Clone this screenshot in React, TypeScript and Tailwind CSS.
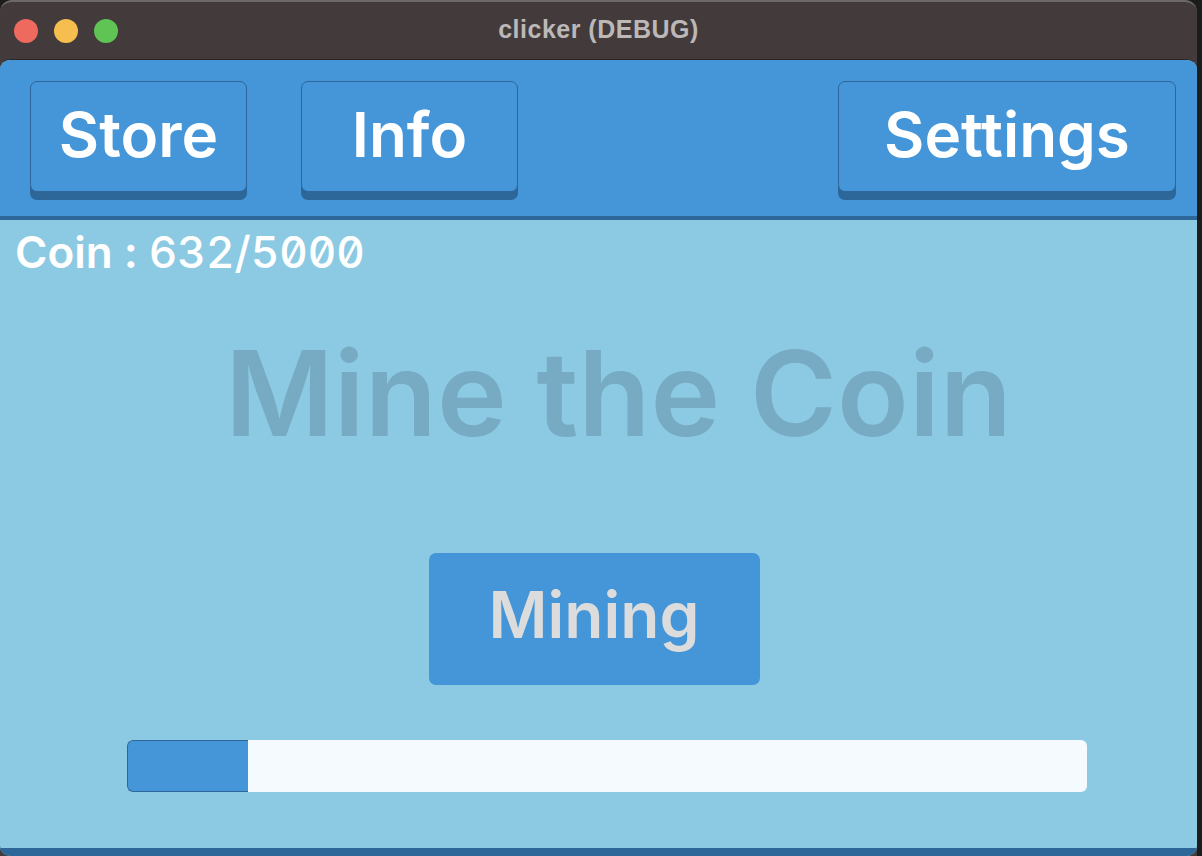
const font = { fontFamily: "Inter, 'Noto Sans', sans-serif" };

function NavButton({ label, width }: { label: string; width: string }) {
  return (
    <button
      className={`${width} h-[111px] rounded-[7px] border border-[#2d6699] bg-[#4496d8] text-white text-[62px] font-semibold leading-none shadow-[0_8px_0_#2d6699] flex items-center justify-center pb-1`}
    >
      {label}
    </button>
  );
}

export default function App() {
  const coins = 632;
  const goal = 5000;

  return (
    <div className="w-[1202px] h-[856px] bg-[#1c1c1c] overflow-hidden" style={font}>
      <div className="w-[1197px] h-full flex flex-col rounded-t-[12px] bg-[#433b3b] border-t-2 border-[#6e6969]">
        {/* Title bar */}
        <div className="relative h-[57px] flex items-center justify-center shrink-0">
          <div className="absolute left-[14px] top-[17px] flex gap-[16px]">
            <span className="w-[24px] h-[24px] rounded-full bg-[#ee6a5f]" />
            <span className="w-[24px] h-[24px] rounded-full bg-[#f5be4f]" />
            <span className="w-[24px] h-[24px] rounded-full bg-[#5fc454]" />
          </div>
          <span
            className="text-[25px] font-bold tracking-[0.5px] text-[#bdb8b8] pb-[2px]"
            style={{ fontFamily: "'Liberation Sans', Arial, sans-serif" }}
          >
            clicker (DEBUG)
          </span>
        </div>

        {/* App content */}
        <div className="flex-1 flex flex-col rounded-[10px] overflow-hidden bg-[#8ccae3] border-t border-[#2a2525]">
          {/* Header */}
          <div className="h-[160px] shrink-0 bg-[#4496d8] border-b-4 border-[#2d6699] flex items-start justify-between pl-[30px] pr-[21px] pt-[21px]">
            <div className="flex gap-[54px]">
              <NavButton label="Store" width="w-[217px]" />
              <NavButton label="Info" width="w-[217px]" />
            </div>
            <NavButton label="Settings" width="w-[338px]" />
          </div>

          {/* Body */}
          <div className="flex-1 flex flex-col border-b-8 border-[#2d6699]">
            <div className="pl-[15px] pt-[4px] text-white text-[44px] font-semibold leading-[56px]">
              Coin : <span className="tabular-nums slashed-zero font-medium">{coins}/{goal}</span>
            </div>

            <div className="flex justify-center pl-[40px] mt-[48px]">
              <h1 className="text-[118px] font-semibold leading-[130px] text-[#77abc3]">
                Mine the Coin
              </h1>
            </div>

            <div className="flex justify-center pr-[9px] mt-[95px]">
              <button className="w-[331px] h-[132px] rounded-[7px] bg-[#4496d8] text-[#dcdcdc] text-[64px] font-semibold leading-none pb-2">
                Mining
              </button>
            </div>

            <div className="mt-[55px] ml-[127px] w-[960px] h-[52px] rounded-[6px] bg-[#f5fafe] flex">
              <div
                className="h-full rounded-l-[6px] border border-r-0 border-[#2d6699] bg-[#4496d8]"
                style={{ width: `${(coins / goal) * 100}%` }}
              />
            </div>
          </div>
        </div>
      </div>
    </div>
  );
}
